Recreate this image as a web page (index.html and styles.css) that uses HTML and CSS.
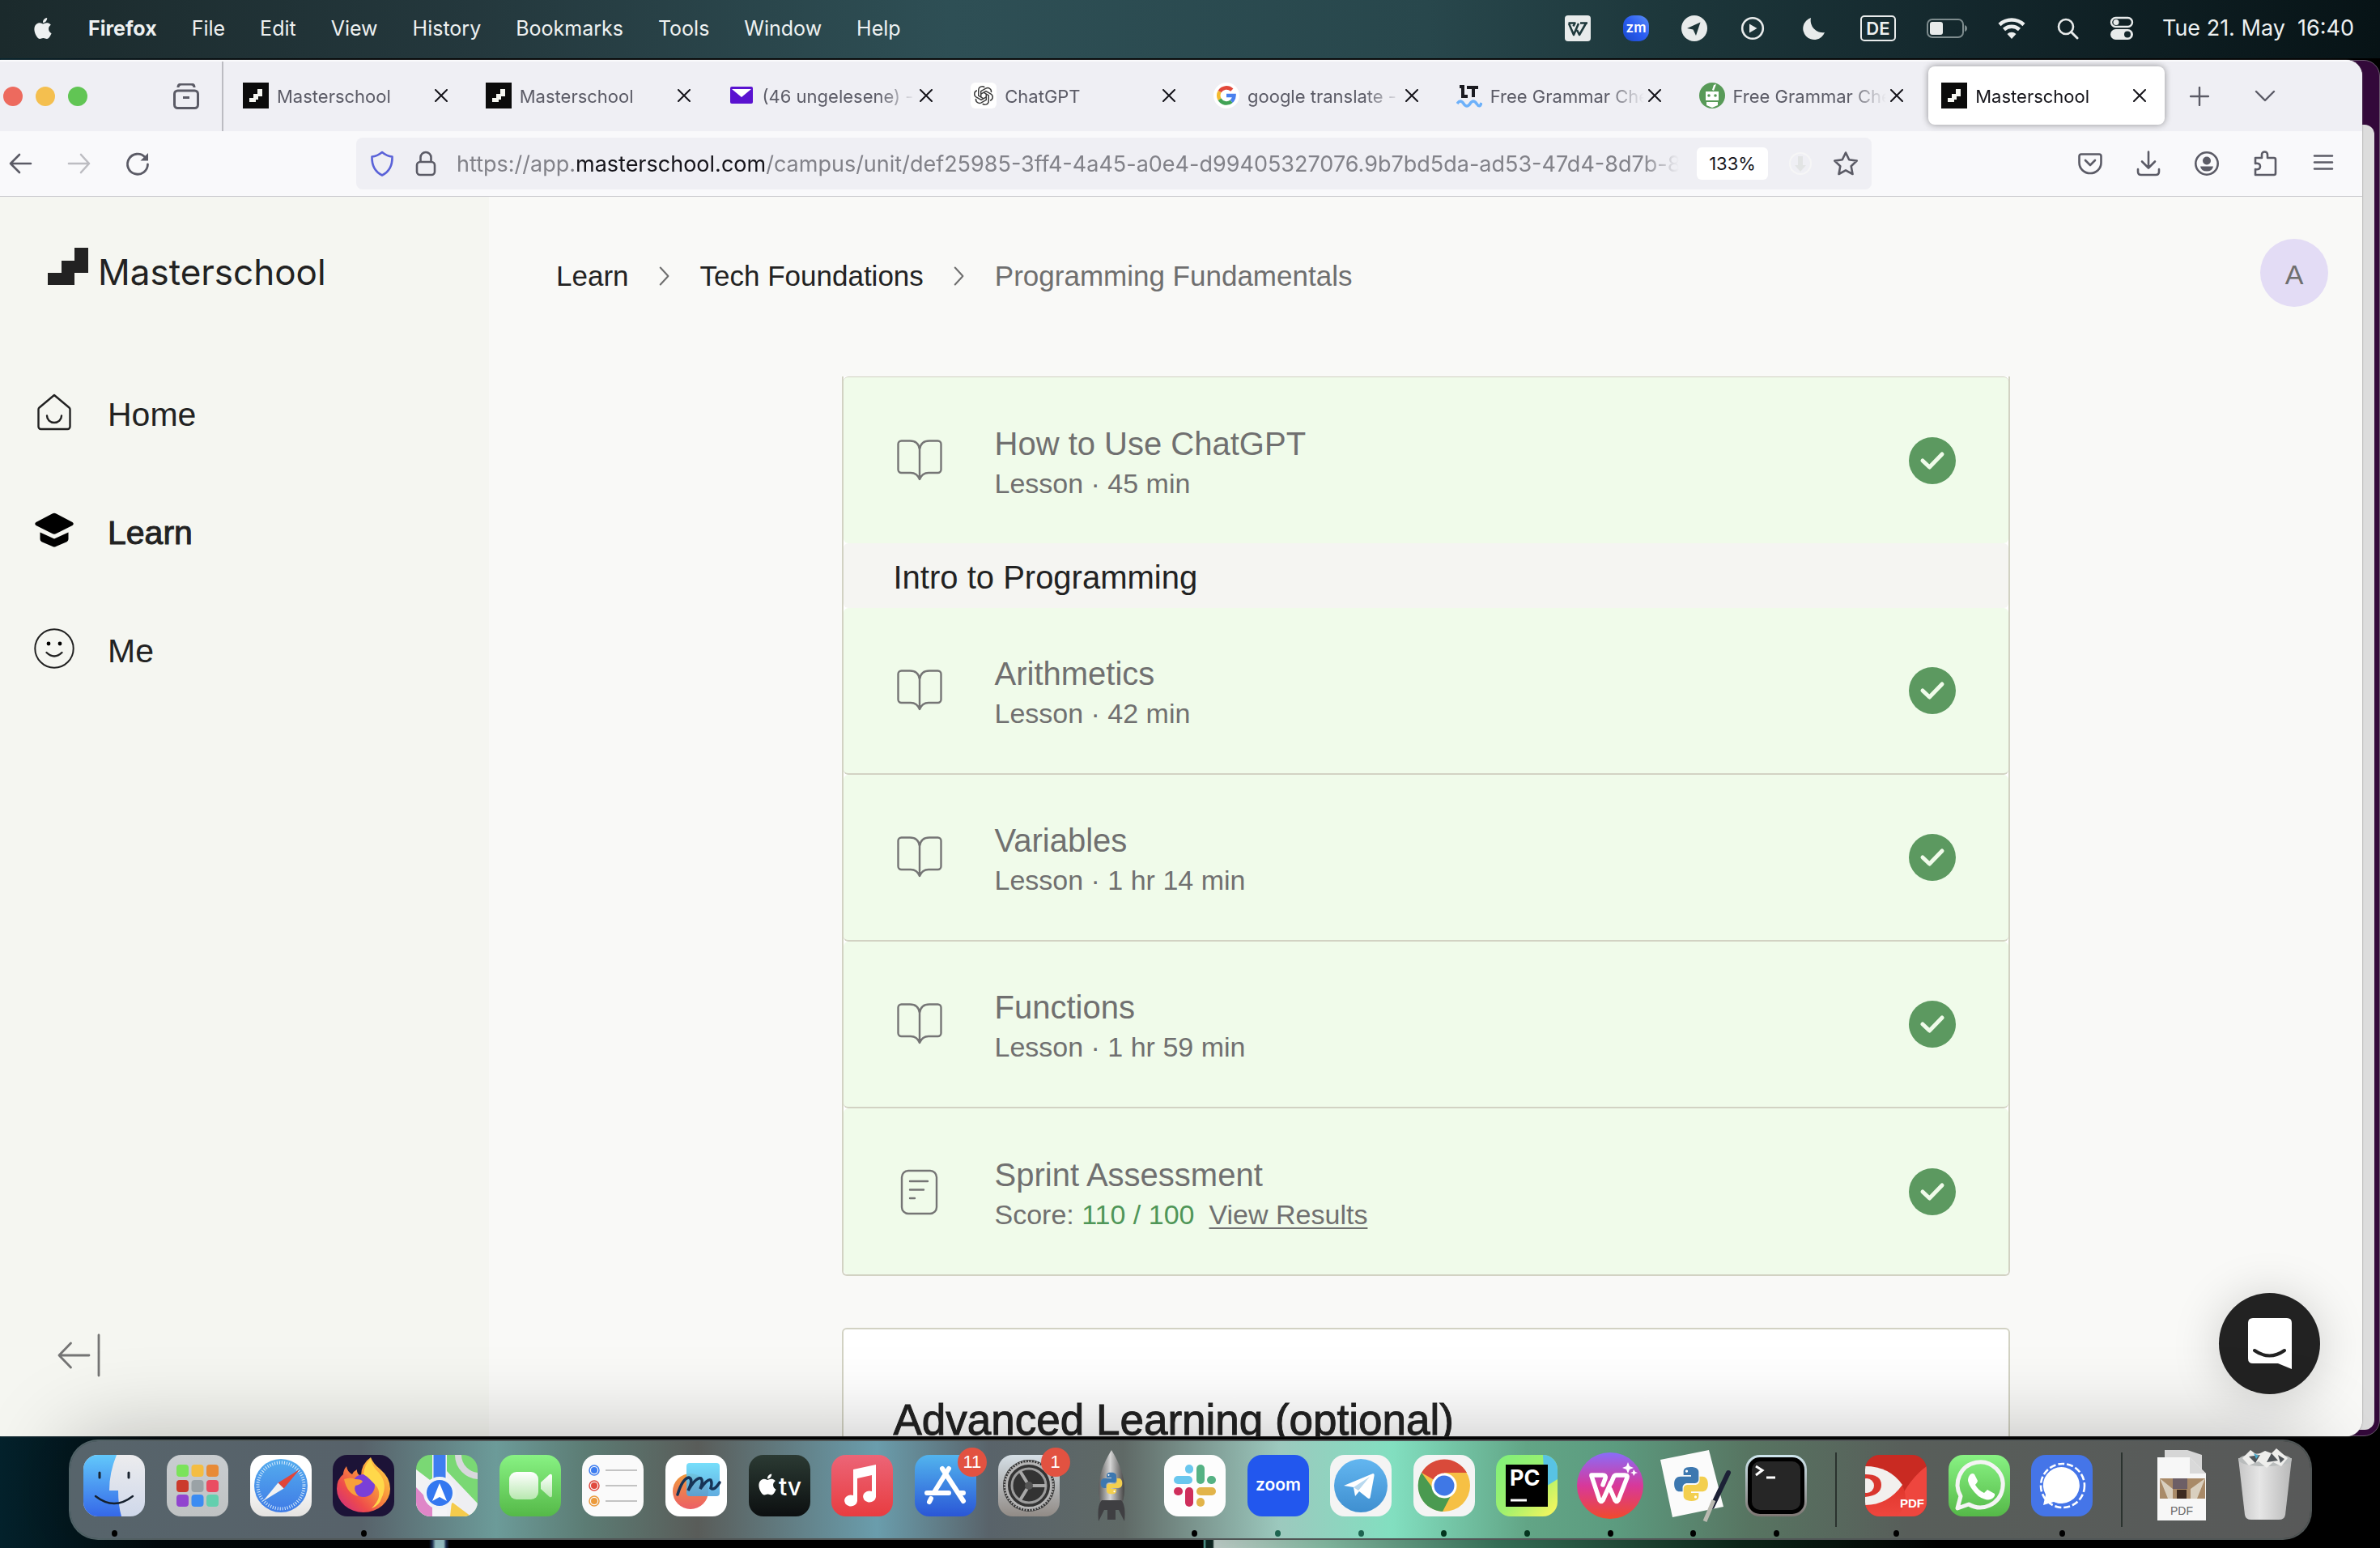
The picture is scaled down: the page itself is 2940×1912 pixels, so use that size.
FILE: index.html
```html
<!DOCTYPE html>
<html lang="en">
<head>
<meta charset="utf-8">
<title>Masterschool</title>
<link rel="stylesheet" href="styles.css">
</head>
<body class="desktop">

<svg class="defs" aria-hidden="true">
  <defs>
    <linearGradient id="g-zm" x1="1" y1="0" x2="0" y2="1"><stop offset="0" stop-color="#5b8ff5"/><stop offset=".5" stop-color="#2a5cf2"/><stop offset="1" stop-color="#1a48c8"/></linearGradient>
    <linearGradient id="g-finder" x1="0" y1="0" x2="0" y2="1"><stop offset="0" stop-color="#62c8fb"/><stop offset="1" stop-color="#3568e8"/></linearGradient>
    <linearGradient id="g-finder2" x1="0" y1="0" x2="0" y2="1"><stop offset="0" stop-color="#ececee"/><stop offset="1" stop-color="#cfd8ea"/></linearGradient>
    <linearGradient id="g-grey" x1="0" y1="0" x2="0" y2="1"><stop offset="0" stop-color="#c9cdd0"/><stop offset="1" stop-color="#bfc2c3"/></linearGradient>
    <linearGradient id="g-white" x1="0" y1="0" x2="0" y2="1"><stop offset=".4" stop-color="#ffffff"/><stop offset="1" stop-color="#e4e2e0"/></linearGradient>
    <linearGradient id="g-blue" x1="0" y1="0" x2="0" y2="1"><stop offset="0" stop-color="#54acee"/><stop offset="1" stop-color="#3f7be6"/></linearGradient>
    <linearGradient id="g-fox" x1="1" y1="0" x2="0" y2="1"><stop offset="0" stop-color="#ffe04b"/><stop offset=".4" stop-color="#f9953b"/><stop offset=".7" stop-color="#ee4b4b"/><stop offset="1" stop-color="#c9268a"/></linearGradient>
    <linearGradient id="g-green" x1="0" y1="0" x2="0" y2="1"><stop offset="0" stop-color="#88f283"/><stop offset="1" stop-color="#55b948"/></linearGradient>
    <linearGradient id="g-cam" x1="0" y1="0" x2="0" y2="1"><stop offset="0" stop-color="#ffffff"/><stop offset="1" stop-color="#b8e8b0"/></linearGradient>
    <linearGradient id="g-free" x1="0" y1="0" x2="0" y2="1"><stop offset="0" stop-color="#68dbfa"/><stop offset="1" stop-color="#4fa3dc"/></linearGradient>
    <linearGradient id="g-orange" x1="0" y1="0" x2="0" y2="1"><stop offset="0" stop-color="#f09a3c"/><stop offset="1" stop-color="#ec5f66"/></linearGradient>
    <linearGradient id="g-tv" x1="0" y1="0" x2="0" y2="1"><stop offset="0" stop-color="#2b3a33"/><stop offset="1" stop-color="#0c0f10"/></linearGradient>
    <linearGradient id="g-music" x1="0" y1="0" x2="0" y2="1"><stop offset="0" stop-color="#ec6577"/><stop offset="1" stop-color="#e83c40"/></linearGradient>
    <linearGradient id="g-store" x1="0" y1="0" x2="0" y2="1"><stop offset="0" stop-color="#52b4ee"/><stop offset="1" stop-color="#2a56d6"/></linearGradient>
    <linearGradient id="g-set" x1="0" y1="0" x2="0" y2="1"><stop offset="0" stop-color="#d5dfe6"/><stop offset="1" stop-color="#918b86"/></linearGradient>
    <linearGradient id="g-metal" x1="0" y1="0" x2="1" y2="0"><stop offset="0" stop-color="#5a5a5a"/><stop offset=".45" stop-color="#d6d6d6"/><stop offset="1" stop-color="#444"/></linearGradient>
    <linearGradient id="g-tg" x1="0" y1="0" x2="0" y2="1"><stop offset="0" stop-color="#63b6f0"/><stop offset="1" stop-color="#3f8fd0"/></linearGradient>
    <linearGradient id="g-pc" x1="0" y1="0" x2="1" y2="1"><stop offset="0" stop-color="#7ff07a"/><stop offset=".5" stop-color="#9df06e"/><stop offset="1" stop-color="#fff75c"/></linearGradient>
    <linearGradient id="g-wps" x1="0" y1="0" x2="0" y2="1"><stop offset="0" stop-color="#8a6cf8"/><stop offset=".5" stop-color="#d8389a"/><stop offset="1" stop-color="#f04a2c"/></linearGradient>
    <linearGradient id="g-term" x1="0" y1="0" x2="0" y2="1"><stop offset="0" stop-color="#cfe6ee"/><stop offset="1" stop-color="#7d7672"/></linearGradient>
    <linearGradient id="g-red" x1="0" y1="0" x2="0" y2="1"><stop offset="0" stop-color="#e0362c"/><stop offset="1" stop-color="#ee463e"/></linearGradient>
    <linearGradient id="g-trash" x1="0" y1="0" x2="1" y2="0"><stop offset="0" stop-color="#c6c6c6"/><stop offset=".4" stop-color="#e6e6e6"/><stop offset="1" stop-color="#b8b8b8"/></linearGradient>
    <clipPath id="clip-app"><rect width="76" height="76" rx="18"/></clipPath>
  </defs>
  <symbol id="i-stairs" viewBox="0 0 32 32"><rect width="32" height="32" fill="#0b0b0b"/><path d="M18 8h6v9h-5v4h-3v3H8v-5h5v-5h5z" fill="#f5f6f1"/></symbol>
  <symbol id="i-x" viewBox="0 0 16 16"><path d="M1 1l14 14M15 1L1 15" stroke="#15141a" stroke-width="2" stroke-linecap="round" fill="none"/></symbol>
  <symbol id="i-chev" viewBox="0 0 16 28"><path d="M2 2l11 12L2 26" fill="none" stroke="#6f6f6f" stroke-width="2.400" stroke-linecap="round" stroke-linejoin="round"/></symbol>
  <symbol id="i-book" viewBox="0 0 64 64"><path d="M32 18C31 11 27 7.500 20 7.500H9.500a4 4 0 0 0-4 4V43a4 4 0 0 0 4 4H21c6 0 9 3 11 8 2-5 5-8 11-8h11.500a4 4 0 0 0 4-4V11.500a4 4 0 0 0-4-4H44c-7 0-11 3.500-12 10.500zM32 18v37" fill="none" stroke="#757575" stroke-width="2.400" stroke-linejoin="round"/></symbol>
  <symbol id="i-doc" viewBox="0 0 64 64"><rect x="10" y="6" width="43" height="53" rx="8" fill="none" stroke="#757575" stroke-width="2.400"/><path d="M20 19h22M20 29.500h17M20 40h6" stroke="#757575" stroke-width="2.400" stroke-linecap="round"/></symbol>
  <symbol id="i-check" viewBox="0 0 58 58"><circle cx="29" cy="29" r="29" fill="#5c9960"/><path d="M17 29l8.500 8L41 21" fill="none" stroke="#f0fbea" stroke-width="5" stroke-linecap="round" stroke-linejoin="round"/></symbol>
  <symbol id="i-apple" viewBox="0 0 24 24"><path d="M12.152 6.896c-.948 0-2.415-1.078-3.960-1.040-2.040.027-3.910 1.183-4.961 3.014-2.117 3.675-.546 9.103 1.519 12.090 1.013 1.454 2.208 3.090 3.792 3.039 1.520-.065 2.090-.987 3.935-.987 1.831 0 2.350.987 3.960.948 1.637-.026 2.676-1.480 3.676-2.948 1.156-1.688 1.636-3.325 1.662-3.415-.039-.013-3.182-1.221-3.220-4.857-.026-3.040 2.480-4.494 2.597-4.559-1.429-2.090-3.623-2.324-4.390-2.376-2-.156-3.675 1.090-4.610 1.090zM15.530 3.830c.843-1.012 1.400-2.427 1.245-3.830-1.207.052-2.662.805-3.532 1.818-.780.896-1.454 2.338-1.273 3.714 1.338.104 2.715-.688 3.559-1.701"/></symbol>
  <symbol id="i-python" viewBox="0 0 40 40"><path d="M19.500 1C12 1 11.500 4 11.500 6.500V10H20v1.500H8C4 11.500 1 14 1 20s3 8.500 6 8.500h3.500V24c0-3 2.500-5 5-5h9c2.500 0 4-2 4-4.500v-8C28.500 3.500 26 1 19.500 1z" fill="#3d78b0"/><path d="M20.500 39c7.500 0 8-3 8-5.500V30H20v-1.500h12c4 0 7-2.500 7-8.500s-3-8.500-6-8.500h-3.500V16c0 3-2.500 5-5 5h-9c-2.500 0-4 2-4 4.500v8c0 3 2.500 5.500 9 5.500z" fill="#f3cf4e"/><circle cx="15" cy="5.500" r="1.500" fill="#fff"/><circle cx="25" cy="34.500" r="1.500" fill="#fff"/></symbol>
</svg>

<header class="menubar">
  <nav class="menus" aria-label="Menu bar">
    <svg class="apple"><use href="#i-apple"/></svg>
    <strong>Firefox</strong>
    <span>File</span><span>Edit</span><span>View</span><span>History</span><span>Bookmarks</span><span>Tools</span><span>Window</span><span>Help</span>
  </nav>
  <div class="status">
    <svg width="34" height="34" viewBox="0 0 34 34"><rect x="1" y="1" width="32" height="32" rx="4" fill="#e8ebeb"/><path d="M5.500 10.500h8l-2 4M6 11l6 14 6-14M16 19l3 6 8-14M20 10.500h9" fill="none" stroke="#1f393c" stroke-width="2.600" stroke-linejoin="round"/></svg>
    <svg width="34" height="34" viewBox="0 0 34 34"><rect x="1" y="1" width="32" height="32" rx="13" fill="url(#g-zm)"/><text x="17" y="22" text-anchor="middle" class="zm">zm</text></svg>
    <svg width="34" height="34" viewBox="0 0 34 34"><circle cx="17" cy="17" r="16" fill="#e8ebeb"/><path d="M24.500 9.500L8 17l7.500 1.500L19 26z" fill="#1c3437"/></svg>
    <svg width="34" height="34" viewBox="0 0 34 34"><circle cx="17" cy="17" r="12.800" fill="none" stroke="#e8ebeb" stroke-width="2.600"/><path d="M13 11.500v11l9.500-5.500z" fill="#e8ebeb"/></svg>
    <svg width="40" height="34" viewBox="0 0 40 34"><path d="M17 4a15 15 0 0 0 17 18A13.800 13.800 0 1 1 17 4z" fill="#e8ebeb"/></svg>
    <span class="lang">DE</span>
    <svg width="50" height="26" viewBox="0 0 50 26"><rect x="1" y="2" width="44" height="22" rx="6" fill="none" stroke="#7e8c8e" stroke-width="2"/><rect x="4" y="5" width="16" height="16" rx="3" fill="#e8ebeb"/><path d="M47 9q3 1 3 4t-3 4z" fill="#7e8c8e"/></svg>
    <svg width="34" height="28" viewBox="0 0 34 28"><path d="M2 9.500a22 22 0 0 1 30 0M7.500 15.500a14 14 0 0 1 19 0" fill="none" stroke="#eceeee" stroke-width="4.500"/><path d="M17 27l-5.500-6a8 8 0 0 1 11 0z" fill="#eceeee"/></svg>
    <svg width="28" height="28" viewBox="0 0 28 28"><circle cx="12" cy="12" r="9" fill="none" stroke="#e8ebeb" stroke-width="2.600"/><path d="M18.500 18.500L26 26" stroke="#e8ebeb" stroke-width="3" stroke-linecap="round"/></svg>
    <svg width="30" height="30" viewBox="0 0 30 30"><rect x="2" y="2" width="26" height="11" rx="5.500" fill="none" stroke="#e8ebeb" stroke-width="2.400"/><circle cx="8" cy="7.500" r="3.500" fill="#e8ebeb"/><rect x="1" y="16" width="28" height="13" rx="6.500" fill="#e8ebeb"/><circle cx="22" cy="22.500" r="4" fill="#13262a"/></svg>
    <time>Tue 21. May&nbsp; 16:40</time>
  </div>
</header>

<div class="stage">
  <div class="back-window purple"></div>
  <div class="back-window pale"></div>
  <section class="window">
    <div class="tabstrip">
      <div class="lights"><i class="red"></i><i class="yellow"></i><i class="green"></i></div>
      <button class="view-btn" aria-label="Firefox View"><svg width="32" height="32" viewBox="0 0 32 32"><path d="M6 5q0-4 4-4h12q4 0 4 4" fill="none" stroke="#5b5b66" stroke-width="3"/><rect x="1.500" y="9" width="29" height="21.500" rx="4" fill="none" stroke="#5b5b66" stroke-width="3"/><rect x="12" y="16" width="8" height="3" fill="#5b5b66"/></svg></button>
      <div class="tabs">
        <div class="tab"><svg class="fav"><use href="#i-stairs"/></svg><a href="#">Masterschool</a><button class="close" aria-label="Close tab"><svg><use href="#i-x"/></svg></button></div>
        <div class="tab"><svg class="fav"><use href="#i-stairs"/></svg><a href="#">Masterschool</a><button class="close" aria-label="Close tab"><svg><use href="#i-x"/></svg></button></div>
        <div class="tab"><svg class="fav" viewBox="0 0 32 32"><rect x="2" y="5" width="28" height="21" rx="2" fill="#5a12d0"/><path d="M4 8h24L16 18z" fill="#fff"/></svg><a href="#">(46 ungelesene) -</a><button class="close" aria-label="Close tab"><svg><use href="#i-x"/></svg></button></div>
        <div class="tab"><svg class="fav" viewBox="0 0 32 32"><rect width="32" height="32" rx="6" fill="#fff"/><g fill="none" stroke="#3a3a3a" stroke-width="1.800" transform="translate(16 16) scale(.82) translate(-16 -16)"><path id="petal" d="M12 18.300V9.500l7.500-4.300a5.500 5.500 0 0 1 8 6"/><use href="#petal" transform="rotate(60 16 16)"/><use href="#petal" transform="rotate(120 16 16)"/><use href="#petal" transform="rotate(180 16 16)"/><use href="#petal" transform="rotate(240 16 16)"/><use href="#petal" transform="rotate(300 16 16)"/></g></svg><a href="#">ChatGPT</a><button class="close" aria-label="Close tab"><svg><use href="#i-x"/></svg></button></div>
        <div class="tab"><svg class="fav" viewBox="0 0 32 32"><circle cx="16" cy="16" r="16" fill="#fff"/><g fill="none" stroke-width="4.600"><path d="M22.800 9.200A9.700 9.700 0 0 0 7.600 11.200" stroke="#e2483a"/><path d="M7.600 11.200a9.700 9.700 0 0 0 0 9.600" stroke="#f4bb2f"/><path d="M7.600 20.800a9.700 9.700 0 0 0 14.600 2.400" stroke="#41a355"/><path d="M22.200 23.200a9.700 9.700 0 0 0 3.300-7.200H16" stroke="#4a80ee"/></g></svg><a href="#">google translate -</a><button class="close" aria-label="Close tab"><svg><use href="#i-x"/></svg></button></div>
        <div class="tab"><svg class="fav" viewBox="0 0 32 32"><path d="M4 5h4v12h6M13 6h14M21 6v12" fill="none" stroke="#1b1b20" stroke-width="4"/><path d="M1 26q4-6 8 0t8 0 8 0 6-1" fill="none" stroke="#6db1fa" stroke-width="3.500"/></svg><a href="#">Free Grammar Che</a><button class="close" aria-label="Close tab"><svg><use href="#i-x"/></svg></button></div>
        <div class="tab"><svg class="fav" viewBox="0 0 32 32"><circle cx="16" cy="16" r="16" fill="#589a58"/><path d="M8 11h16v11H8zM9 24h14v4l-7 3-7-3zM16 9l2-6 3-1-3 8z" fill="#fff"/><circle cx="12" cy="16" r="1.800" fill="#589a58"/><circle cx="20" cy="16" r="1.800" fill="#589a58"/></svg><a href="#">Free Grammar Che</a><button class="close" aria-label="Close tab"><svg><use href="#i-x"/></svg></button></div>
        <div class="tab active"><svg class="fav"><use href="#i-stairs"/></svg><a href="#">Masterschool</a><button class="close" aria-label="Close tab"><svg><use href="#i-x"/></svg></button></div>
      </div>
      <div class="tab-tools">
        <button aria-label="New tab"><svg width="24" height="24" viewBox="0 0 24 24"><path d="M12 1v22M1 12h22" stroke="#5b5b66" stroke-width="2.400" stroke-linecap="round"/></svg></button>
        <button aria-label="List all tabs"><svg width="26" height="16" viewBox="0 0 26 16"><path d="M2 2l11 11L24 2" fill="none" stroke="#5b5b66" stroke-width="2.400" stroke-linecap="round" stroke-linejoin="round"/></svg></button>
      </div>
    </div>

    <div class="toolbar">
      <div class="nav-btns">
        <button aria-label="Back"><svg width="32" height="32" viewBox="0 0 32 32"><path d="M28 16H3M14 5L3 16l11 11" fill="none" stroke="#5b5b66" stroke-width="2.600" stroke-linecap="round" stroke-linejoin="round"/></svg></button>
        <button aria-label="Forward" disabled><svg width="32" height="32" viewBox="0 0 32 32"><path d="M3 16h25M18 5l10 11-10 11" fill="none" stroke="#bdbdc2" stroke-width="2.600" stroke-linecap="round" stroke-linejoin="round"/></svg></button>
        <button aria-label="Reload"><svg width="32" height="32" viewBox="0 0 32 32"><path d="M28.500 17A12.500 12.500 0 1 1 25 8" fill="none" stroke="#5b5b66" stroke-width="2.800" stroke-linecap="round"/><path d="M29 3v9.500h-9.500z" fill="#5b5b66"/></svg></button>
      </div>
      <div class="urlbar">
        <svg width="32" height="32" viewBox="0 0 32 32"><path d="M16 2q6 5 12.500 5.500Q29 24 16 30.500 3 24 3.500 7.500 10 7 16 2z" fill="none" stroke="#5a62d8" stroke-width="2.600" stroke-linejoin="round"/></svg>
        <svg width="32" height="32" viewBox="0 0 32 32"><rect x="5" y="14" width="22" height="16" rx="4" fill="none" stroke="#5b5b66" stroke-width="2.600"/><path d="M9.500 14V8.500a6.500 6.500 0 0 1 13 0V14" fill="none" stroke="#5b5b66" stroke-width="2.600"/></svg>
        <div class="url" role="textbox" aria-label="Address" contenteditable="true">https://app.<b>masterschool.com</b>/campus/unit/def25985-3ff4-4a45-a0e4-d99405327076.9b7bd5da-ad53-47d4-8d7b-84</div>
        <button class="zoom">133%</button>
        <svg class="dl" width="28" height="28" viewBox="0 0 28 28"><circle cx="14" cy="14" r="13" fill="none" stroke="#f6f6f6" stroke-width="2"/><path d="M11 5h6v11h4l-7 8-7-8h4z" fill="#e2e4e4"/></svg>
        <button aria-label="Bookmark"><svg width="32" height="32" viewBox="0 0 32 32"><path d="M16 2.500l4.200 8.800 9.500 1.300-7 6.600 1.800 9.800-8.500-4.700L7.500 29l1.800-9.800-7-6.600 9.500-1.300z" fill="none" stroke="#5b5b66" stroke-width="2.600" stroke-linejoin="round"/></svg></button>
      </div>
      <div class="ext-btns">
        <button aria-label="Pocket"><svg width="32" height="32" viewBox="0 0 32 32"><path d="M5 4.500h22q2.500 0 2.500 2.500v8a13.500 13 0 0 1-27 0V7q0-2.500 2.500-2.500z" fill="none" stroke="#5b5b66" stroke-width="2.600"/><path d="M10 12l6 6 6-6" fill="none" stroke="#5b5b66" stroke-width="2.600" stroke-linecap="round" stroke-linejoin="round"/></svg></button>
        <button aria-label="Downloads"><svg width="32" height="32" viewBox="0 0 32 32"><path d="M16 1.500V21M8 13.500l8 8 8-8M3 23v3q0 4 4 4h18q4 0 4-4v-3" fill="none" stroke="#5b5b66" stroke-width="2.600" stroke-linecap="round" stroke-linejoin="round"/></svg></button>
        <button aria-label="Account"><svg width="32" height="32" viewBox="0 0 32 32"><circle cx="16" cy="16" r="13.700" fill="none" stroke="#5b5b66" stroke-width="2.600"/><circle cx="16" cy="12.500" r="5" fill="#5b5b66"/><path d="M8 19.500h16q-1 6-8 6t-8-6z" fill="#5b5b66"/></svg></button>
        <button aria-label="Extensions"><svg width="32" height="32" viewBox="0 0 32 32"><path d="M4 30V23q6 1 6-3.500T4 16V9h8V5a3.500 3.500 0 0 1 7 0v4h8q2 0 2 2v17q0 2-2 2z" fill="none" stroke="#5b5b66" stroke-width="2.600" stroke-linejoin="round"/></svg></button>
        <button aria-label="Menu"><svg width="32" height="32" viewBox="0 0 32 32"><path d="M5 6.500h22M5 14.500h22M5 22.500h22" stroke="#5b5b66" stroke-width="2.600" stroke-linecap="round"/></svg></button>
      </div>
    </div>

    <div class="page">
      <aside class="sidebar">
        <a class="logo" href="#"><svg width="50" height="46" viewBox="0 0 50 46"><path d="M33 0h17v31H33v15H0V31h17V16h16z" fill="#222"/></svg><span>Masterschool</span></a>
        <nav class="side-nav" aria-label="Main">
          <a href="#"><svg width="50" height="50" viewBox="0 0 50 50"><path d="M25 3L43.500 18.500a3 3 0 0 1 1 2.500V42a3 3 0 0 1-3 3H8.500a3 3 0 0 1-3-3V21a3 3 0 0 1 1-2.500z" fill="none" stroke="#222" stroke-width="2.400" stroke-linejoin="round"/><path d="M16 28.500a9 8.500 0 0 0 18 0" fill="none" stroke="#222" stroke-width="2.400" stroke-linecap="round"/></svg><span>Home</span></a>
          <a href="#" class="current"><svg width="50" height="50" viewBox="0 0 50 50"><path d="M22.500 3.500q2.500-1.500 5 0L47.500 14q2.500 2 0 4L27.500 28q-2.500 1.500-5 0L2.500 18q-2.500-2 0-4z"/><path d="M7.500 26.500L25 34.500l17.500-8V35q0 2-2 3.200L27 44q-2 1-4 0L9.500 38.200q-2-1.200-2-3.200z"/></svg><span>Learn</span></a>
          <a href="#"><svg width="50" height="50" viewBox="0 0 50 50"><circle cx="25" cy="24" r="23.700" fill="none" stroke="#222" stroke-width="2"/><circle cx="18" cy="18" r="2.400"/><circle cx="32" cy="18" r="2.400"/><path d="M15.500 29q9.500 9 19 0" fill="none" stroke="#222" stroke-width="2.400" stroke-linecap="round"/></svg><span>Me</span></a>
        </nav>
        <button class="collapse" aria-label="Collapse sidebar"><svg width="54" height="54" viewBox="0 0 54 54"><path d="M40 27H3M17.500 12L3 27l14.500 15M52 2v50" fill="none" stroke="#757575" stroke-width="2.800" stroke-linecap="round" stroke-linejoin="round"/></svg></button>
      </aside>

      <main class="main">
        <div class="topbar">
          <nav class="crumbs" aria-label="Breadcrumb">
            <a href="#">Learn</a><svg><use href="#i-chev"/></svg><a href="#">Tech Foundations</a><svg><use href="#i-chev"/></svg><span>Programming Fundamentals</span>
          </nav>
          <button class="avatar">A</button>
        </div>
        <div class="units">
          <section class="card lessons">
            <article class="row"><svg class="kind"><use href="#i-book"/></svg><div class="info"><h3>How to Use ChatGPT</h3><p>Lesson · 45 min</p></div><svg class="done"><use href="#i-check"/></svg></article>
            <h2 class="group">Intro to Programming</h2>
            <article class="row"><svg class="kind"><use href="#i-book"/></svg><div class="info"><h3>Arithmetics</h3><p>Lesson · 42 min</p></div><svg class="done"><use href="#i-check"/></svg></article>
            <article class="row"><svg class="kind"><use href="#i-book"/></svg><div class="info"><h3>Variables</h3><p>Lesson · 1 hr 14 min</p></div><svg class="done"><use href="#i-check"/></svg></article>
            <article class="row"><svg class="kind"><use href="#i-book"/></svg><div class="info"><h3>Functions</h3><p>Lesson · 1 hr 59 min</p></div><svg class="done"><use href="#i-check"/></svg></article>
            <article class="row"><svg class="kind"><use href="#i-doc"/></svg><div class="info"><h3>Sprint Assessment</h3><p>Score: <span class="score">110 / 100</span><a href="#">View Results</a></p></div><svg class="done"><use href="#i-check"/></svg></article>
          </section>
          <section class="card next"><h2>Advanced Learning (optional)</h2></section>
        </div>
      </main>
      <button class="chat" aria-label="Open chat"><svg width="56" height="64" viewBox="0 0 56 64"><path d="M7 0h42q6 0 6 6v57l-17-7H7q-6 0-6-6V6q0-6 6-6z" fill="#fff"/><path d="M9 40q18.500 13 37 0" fill="none" stroke="#222" stroke-width="4" stroke-linecap="round"/></svg></button>
    </div>
  </section>
</div>

<footer class="dock">
  <div class="app on"><svg viewBox="0 0 76 76"><g clip-path="url(#clip-app)"><rect width="76" height="76" fill="url(#g-finder2)"/><path d="M0 0h41Q32 22 32 44h11q0 18 4 32H0z" fill="url(#g-finder)"/></g><path d="M20 22v6M56 22v6" stroke="#1a2430" stroke-width="3" stroke-linecap="round"/><path d="M15 51q23 18 46 0" fill="none" stroke="#15202c" stroke-width="2.400" stroke-linecap="round"/></svg></div>
  <div class="app"><svg viewBox="0 0 76 76"><rect width="76" height="76" rx="18" fill="url(#g-grey)"/><g><rect x="12" y="12" width="15" height="15" rx="4" fill="#7be35a"/><rect x="30.500" y="12" width="15" height="15" rx="4" fill="#f4bd42"/><rect x="49" y="12" width="15" height="15" rx="4" fill="#e88a36"/><rect x="12" y="31" width="15" height="15" rx="4" fill="#cb3a2c"/><rect x="30.500" y="31" width="15" height="15" rx="4" fill="#9aa2a6"/><rect x="49" y="31" width="15" height="15" rx="4" fill="#ea4d62"/><rect x="12" y="49" width="15" height="15" rx="4" fill="#9144cf"/><rect x="30.500" y="49" width="15" height="15" rx="4" fill="#3c8cf2"/><rect x="49" y="49" width="15" height="15" rx="4" fill="#63cfae"/></g></svg></div>
  <div class="app"><svg viewBox="0 0 76 76"><rect width="76" height="76" rx="18" fill="url(#g-white)"/><circle cx="38" cy="38" r="33" fill="url(#g-blue)"/><circle cx="38" cy="38" r="28.500" fill="none" stroke="#d9ecfb" stroke-width="4" stroke-dasharray="1 2"/><path d="M61 18L34.500 34.500l7 7z" fill="#e0453a"/><path d="M16 57l18.500-22.500 7 7z" fill="#f2f2f2"/></svg></div>
  <div class="app on"><svg viewBox="0 0 76 76"><rect width="76" height="76" rx="18" fill="#1c1337"/><path d="M47 3q3 8 12 15 12 10 12 24A33 29 0 0 1 5 42q0-12 8-18 0-5 4-10 1 7 7 10 2-4 6-6-1 5 5 8 0-15 12-23z" fill="url(#g-fox)"/><circle cx="38" cy="38" r="14" fill="#7a3fd8"/><path d="M14 30q8-3 14 0 8 0 9 3-3 4-9 5-3 6 4 13-14-2-18-21z" fill="#f7a03a"/><path d="M47 5q2 10 10 17 12 14 3 32-2 8-12 12 14-14 7-26-10-12-17-16 1-12 9-19z" fill="#ffd84a"/></svg></div>
  <div class="app"><svg viewBox="0 0 76 76"><g clip-path="url(#clip-app)"><rect width="76" height="76" fill="#7ad874"/><path d="M0 18L76 76H0z" fill="#f2f2f4"/><path d="M0 40l34 36H0z" fill="#df86c8"/><path d="M38 20L76 60v16H66L30 40z" fill="#eeeef2"/><path d="M44 58l24 18H42z" fill="#f5cb4c"/><path d="M20 0h18v76H20z" fill="#f4f4f6"/><path d="M21.500 0h15v34h-15z" fill="#3f7df0"/><circle cx="78" cy="0" r="26" fill="none" stroke="#d8d8dc" stroke-width="8"/></g><circle cx="29" cy="47" r="18" fill="#3478f0" stroke="#f0f2f6" stroke-width="4"/><path d="M29 35l9 22-9-5-9 5z" fill="#fff"/></svg></div>
  <div class="app"><svg viewBox="0 0 76 76"><rect width="76" height="76" rx="18" fill="url(#g-green)"/><rect x="12" y="21" width="36" height="34" rx="9" fill="url(#g-cam)"/><path d="M51 34l11-10q3-1 3 2v24q0 3-3 2L51 42z" fill="url(#g-cam)"/></svg></div>
  <div class="app"><svg viewBox="0 0 76 76"><rect width="76" height="76" rx="18" fill="#fafafa"/><path d="M29 19h39M29 38h39M29 57h39" stroke="#c3c3c3" stroke-width="2"/><g stroke-width="1.500" fill="none"><circle cx="15" cy="19" r="6" stroke="#3d7df0"/><circle cx="15" cy="38" r="6" stroke="#e04a40"/><circle cx="15" cy="57" r="6" stroke="#eb9a3c"/></g><circle cx="15" cy="19" r="4" fill="#3d7df0"/><circle cx="15" cy="38" r="4" fill="#e04a40"/><circle cx="15" cy="57" r="4" fill="#eb9a3c"/></svg></div>
  <div class="app"><svg viewBox="0 0 76 76"><rect width="76" height="76" rx="18" fill="#fff"/><circle cx="31" cy="45" r="22" fill="url(#g-orange)"/><rect x="26" y="10" width="41" height="41" rx="4" fill="url(#g-free)" opacity=".9"/><path d="M15 49q6-20 14-21 6 2-1 16 10-17 16-15 3 3-1 13 9-13 13-11 2 4 0 10 4 4 11-7" fill="none" stroke="#173456" stroke-width="3.500" stroke-linecap="round"/></svg></div>
  <div class="app"><svg viewBox="0 0 76 76"><rect width="76" height="76" rx="18" fill="url(#g-tv)"/><svg x="10" y="23" width="26" height="27" fill="#fff"><use href="#i-apple"/></svg><text x="51" y="50" text-anchor="middle" class="tv">tv</text></svg></div>
  <div class="app"><svg viewBox="0 0 76 76"><rect width="76" height="76" rx="18" fill="url(#g-music)"/><path d="M27 18l28-6v40a8 7 0 1 1-5-7V25l-18 4v28a8 7 0 1 1-5-7z" fill="#fff"/></svg></div>
  <div class="app"><svg viewBox="0 0 76 76"><rect width="76" height="76" rx="18" fill="url(#g-store)"/><path d="M34 17l26 40M42 17L24 46M15 47h27M54 47h6M20 54l-2 4" stroke="#fff" stroke-width="6" stroke-linecap="round"/></svg><span class="badge">11</span></div>
  <div class="app"><svg viewBox="0 0 76 76"><rect width="76" height="76" rx="18" fill="url(#g-set)"/><circle cx="38" cy="38" r="32" fill="#333"/><circle cx="38" cy="38" r="27.500" fill="none" stroke="#b5b5b5" stroke-width="3"/><circle cx="38" cy="38" r="30" fill="none" stroke="#b5b5b5" stroke-width="2.500" stroke-dasharray="1.500 2"/><circle cx="38" cy="38" r="21" fill="none" stroke="#9c9c9c" stroke-width="3"/><path d="M38 38h21M38 38L27 20M38 38L27 56" stroke="#a8a8a8" stroke-width="4"/><circle cx="38" cy="38" r="5" fill="#555"/></svg><span class="badge">1</span></div>
  <div class="app"><svg viewBox="0 0 76 76"><path d="M38-6q16 26 16 48 0 16-6 23H28q-6-7-6-23 0-22 16-48z" fill="url(#g-metal)"/><path d="M26 56q-6 6-4 26l7-14h4v12h10V68h4l7 14q2-20-4-26z" fill="#3f3f42"/><svg x="24" y="19" width="28" height="32"><use href="#i-python"/></svg></svg></div>
  <div class="app on"><svg viewBox="0 0 76 76"><rect width="76" height="76" rx="18" fill="#fdfdfd"/><g stroke-width="10" stroke-linecap="round"><path d="M17 31h13" stroke="#6ac7ee"/><path d="M31 17v1" stroke="#6ac7ee"/><path d="M45 17v14" stroke="#55b284"/><path d="M58 31h1" stroke="#55b284"/><path d="M45 45h14" stroke="#e2b44a"/><path d="M45 58v1" stroke="#e2b44a"/><path d="M31 45v14" stroke="#cf2f5c"/><path d="M17 45h1" stroke="#cf2f5c"/></g></svg></div>
  <div class="app on teal"><svg viewBox="0 0 76 76"><rect width="76" height="76" rx="18" fill="#2257ee"/><text x="38" y="44" text-anchor="middle" class="zoomtxt">zoom</text></svg></div>
  <div class="app on teal"><svg viewBox="0 0 76 76"><rect width="76" height="76" rx="18" fill="#f4f4f4"/><circle cx="38" cy="38" r="33" fill="url(#g-tg)"/><path d="M17 38l36-15q2 0 1.500 3l-5 27q-1 2-3.500 0l-10-8-5 6-2-11z" fill="#fff"/><path d="M29 40l20-13-14 17z" fill="#b8d8ee"/></svg></div>
  <div class="app on dark"><svg viewBox="0 0 76 76"><rect width="76" height="76" rx="18" fill="#f4f4f4"/><circle cx="38" cy="38" r="32" fill="#f6c044"/><path d="M38 38L10 22A32 32 0 0 1 66 22H38z" fill="#d94a3a"/><path d="M10 22A32 32 0 0 0 36 70L49 45l-23-1z" fill="#4a9a50"/><circle cx="38" cy="38" r="15.500" fill="#fff"/><circle cx="38" cy="38" r="12.500" fill="#3f78e6"/></svg></div>
  <div class="app on dark"><svg viewBox="0 0 76 76"><g clip-path="url(#clip-app)"><rect width="76" height="76" fill="url(#g-pc)"/><path d="M58 0h18v30L60 40z" fill="#58c3e4"/></g><rect x="12" y="12" width="52" height="52" fill="#000"/><text x="17" y="38" class="pctxt">PC</text><path d="M18 56h20" stroke="#fff" stroke-width="3"/></svg></div>
  <div class="app on"><svg viewBox="0 0 76 76"><circle cx="38" cy="38" r="41" fill="url(#g-wps)"/><path d="M15 25h14q4 0 3 4l-3 8M15 26l10 30q2 3 4 0l10-22M38 42l6 14q2 3 4 0l11-28q1-3-3-3H46q-3 0-4 3l-3 7" fill="none" stroke="#fff" stroke-width="5.500" stroke-linejoin="round" stroke-linecap="round"/><path d="M60 9l2 5 5 2-5 2-2 5-2-5-5-2 5-2zM67 18l2 3 3 1-3 1-2 3-1-3-3-1 3-1z" fill="#fff"/></svg></div>
  <div class="app on"><svg viewBox="0 0 76 76"><path d="M-3 6L57-6l18 70L12 77z" fill="#fbfbfb"/><svg x="11" y="14" width="48" height="44"><use href="#i-python"/></svg><path d="M81 22l-20 42" stroke="#1c2136" stroke-width="6" stroke-linecap="round"/><path d="M63 56L52 82" stroke="#b9b9b0" stroke-width="5"/></svg></div>
  <div class="app on"><svg viewBox="0 0 76 76"><rect width="76" height="76" rx="18" fill="url(#g-term)"/><rect x="3" y="3" width="70" height="70" rx="15" fill="#000"/><rect x="8" y="8" width="60" height="60" rx="10" fill="#262626"/><path d="M13 14l8 5-8 6M26 28h11" fill="none" stroke="#fff" stroke-width="3"/></svg></div>
  <div class="rule"></div>
  <div class="app on"><svg viewBox="0 0 76 76"><g clip-path="url(#clip-app)"><rect width="76" height="76" fill="#c92a22"/><path d="M76 14Q56 28 40 60L30 76h46z" fill="#ee463e"/><path d="M0 62q26-2 46-24 10 20-6 38H0z" fill="url(#g-red)"/><path d="M0 14q30 0 46 23-18 25-46 25z" fill="#f2f0ee"/><path d="M0 24q20 0 20 13T0 52z" fill="#d9362e"/><circle cx="2" cy="38" r="9" fill="#f2f0ee"/></g><text x="58" y="65" text-anchor="middle" class="pdftxt">PDF</text></svg></div>
  <div class="app"><svg viewBox="0 0 76 76"><rect width="76" height="76" rx="18" fill="url(#g-green)"/><path d="M11 66l4-15A28 28 0 1 1 25 61z" fill="none" stroke="#f4f4f4" stroke-width="5" stroke-linejoin="round"/><path d="M27 24q3-2 5 0l4 8q0 2-3 5 4 7 11 10l4-4 9 5q1 3-3 6-6 4-17-3Q26 41 24 32q0-5 3-8z" fill="#fff"/></svg></div>
  <div class="app on"><svg viewBox="0 0 76 76"><rect width="76" height="76" rx="18" fill="#4575e8"/><path d="M15 62l3-13A22.500 22.500 0 1 1 28 58z" fill="#fff"/><circle cx="39" cy="38" r="27" fill="none" stroke="#fff" stroke-width="2.600" stroke-dasharray="8 3"/></svg></div>
  <div class="rule"></div>
  <div class="app"><svg viewBox="0 0 76 76"><path d="M17-6h28l18 6v24H17z" fill="#d6d6d6"/><path d="M8 3h40l20 20v58H8z" fill="#f7f7f7"/><path d="M48 3l20 20H48z" fill="#d9d9d9"/><rect x="11" y="29" width="56" height="25" fill="#a98a68"/><rect x="27" y="29" width="18" height="13" fill="#6d5f66"/><path d="M11 29l16 13v12h-6zM67 29L49 42v12h8z" fill="#d9cfbf"/><rect x="32" y="43" width="12" height="11" fill="#3d2a20"/><text x="38" y="74" text-anchor="middle" class="filetxt">PDF</text></svg></div>
  <div class="app"><svg viewBox="0 0 76 76"><path d="M5 4h66l-8 70q-1 6-8 6H21q-7 0-8-6z" fill="url(#g-trash)"/><ellipse cx="38" cy="6" rx="33" ry="8" fill="#b9bcbc"/><path d="M10 4l10-10 8 6 10-5 8 3 6-6 14 12-8 10-10-5-8 7-10-8-12 5z" fill="#eeeeec"/><path d="M18 2l8 8 6-10zM40 9l6-11 8 9zM54 0l8 5-5 5z" fill="#4f5458"/><path d="M24-2l6 3-3 4z" fill="#4aa7c8"/></svg></div>
</footer>
</body>
</html>
```
FILE: styles.css
```css
* { box-sizing: border-box; margin: 0; padding: 0; }

.desktop {
  height: 100vh;
  display: flex;
  flex-direction: column;
  overflow: hidden;
  font-family: "Liberation Sans", Arial, sans-serif;
  color: #222;
  background:
    linear-gradient(90deg, transparent 0 530px, #1c2f55 534px, #a5d3d8 538px 548px, #1c2f55 551px, transparent 555px) left bottom / 1400px 10px no-repeat,
    linear-gradient(90deg, transparent 0 1486px, #6fd0c0 1488px, #0f2a24 1490px 1498px, #cfe0da 1500px, #8fcab0 1640px, #3d7d62 1850px, #0e2a1c 2150px, #000 2400px) left bottom / 100% 10px no-repeat,
    linear-gradient(90deg, #04222c 0, #020a0d 200px, #000 500px);
}
.defs { position: absolute; width: 0; height: 0; }
button { border: 0; background: none; font: inherit; color: inherit; display: grid; place-items: center; }
a { color: inherit; text-decoration: none; }

/* Menu bar */
.menubar {
  flex: none;
  height: 72px;
  margin-bottom: 2px;
  padding: 0 32px 2px 40px;
  display: flex;
  align-items: center;
  justify-content: space-between;
  color: #eef1f1;
  font: 25px/32px Inter, sans-serif;
  background: linear-gradient(90deg, #1b2a2c 0, #24383d 20%, #2e4f55 40%, #28474c 60%, #1d373b 70%, #14282d 82%, #071316 100%);
}
.menus { display: flex; align-items: center; gap: 43px; }
.menus strong { font-weight: 700; }
.apple { width: 26px; height: 32px; fill: #eef1f1; overflow: visible; }
.status { display: flex; align-items: center; gap: 38px; }
.status time { white-space: nowrap; font-size: 27px; margin-left: -3px; }
.lang { width: 44px; height: 32px; border: 2px solid #e8ebeb; border-radius: 5px; font-size: 22px; font-weight: 600; line-height: 28px; text-align: center; }
.zm { font: 600 17px Inter, sans-serif; fill: #fff; }

/* Windows */
.stage { flex: 1; min-height: 0; position: relative; display: flex; }
.back-window { position: absolute; right: 0; }
.purple { top: 0; bottom: 0; width: 200px; border-radius: 20px; background: #33093a; border: 1px solid #6a5a6e; }
.pale { top: 80px; bottom: 8px; right: 7px; width: 200px; border-radius: 12px; background: #dcdcdc; }
.window {
  flex: 1;
  min-width: 0;
  position: relative;
  margin-right: 22px;
  display: flex;
  flex-direction: column;
  border-radius: 0 20px 20px 0;
  overflow: hidden;
  background: #f9f9fb;
  box-shadow: 0 0 2px #777;
}

/* Tab strip */
.tabstrip { flex: none; height: 88px; display: flex; align-items: center; background: #efeff4; border-top: 2px solid #fafafc; font: 22px/28px Inter, sans-serif; }
.lights { width: 214px; padding-left: 4px; display: flex; gap: 16px; }
.lights i { width: 24px; height: 24px; border-radius: 50%; }
.red { background: #ed6a5e; }
.yellow { background: #f4bf4f; }
.green { background: #61c554; }
.view-btn { width: 62px; align-self: stretch; padding-right: 28px; border-right: 2px solid #bcbcc2; }
.tabs { display: flex; align-self: stretch; flex: 0 1 2402px; padding-left: 4px; }
.tab { flex: 1; min-width: 0; margin: 6px 4px 8px; padding: 0 18px 0 16px; display: flex; align-items: center; border-radius: 8px; color: #5b5b66; }
.tab.active { background: #fff; color: #15141a; box-shadow: 0 0 8px rgba(0, 0, 0, .4); }
.fav { flex: none; width: 32px; height: 32px; margin-right: 10px; }
.tab a { flex: 1; min-width: 0; white-space: nowrap; overflow: hidden; padding-top: 2px; -webkit-mask: linear-gradient(90deg, #000 76%, transparent 100%); mask: linear-gradient(90deg, #000 76%, transparent 100%); }
.close { flex: none; width: 26px; height: 26px; }
.close svg { width: 16px; height: 16px; }
.tab-tools { display: flex; gap: 41px; padding-left: 19px; }
.tab-tools button { width: 40px; }

/* Toolbar */
.toolbar { flex: none; height: 81px; padding: 0 32px 0 10px; display: flex; align-items: center; border-bottom: 1px solid #c8c8cc; }
.nav-btns { display: flex; gap: 40px; flex: 0 0 430px; }
.urlbar { flex: 0 1 1872px; min-width: 0; height: 64px; padding: 0 16px; display: flex; align-items: center; gap: 22px; background: #efeff4; border-radius: 8px; font: 27px/36px Inter, sans-serif; }
.urlbar > svg { flex: none; }
.url { flex: 1; min-width: 0; white-space: nowrap; overflow: hidden; color: #828289; padding-top: 2px; -webkit-mask: linear-gradient(90deg, #000 97%, transparent 100%); mask: linear-gradient(90deg, #000 97%, transparent 100%); }
.url b { font-weight: 400; color: #15141a; }
.zoom { width: 88px; height: 40px; background: #fff; border-radius: 6px; font-size: 22px; color: #15141a; }
.urlbar .dl { margin: 0 4px; }
.ext-btns { margin-left: auto; display: flex; gap: 40px; }

/* Page */
.page { flex: 1; min-height: 0; position: relative; display: flex; background: #f9f9f7; }
.sidebar { flex: 0 0 604px; display: flex; flex-direction: column; align-items: flex-start; padding: 63px 42px 73px; background: #f5f6f1; }
.logo { display: flex; align-items: flex-start; gap: 12px; padding-left: 17px; font: 44px/52px Inter, sans-serif; }
.logo span { padding-top: 4px; }
.side-nav { margin-top: 121px; display: flex; flex-direction: column; gap: 92px; font-size: 41px; line-height: 50px; }
.side-nav a { display: flex; align-items: center; gap: 41px; }
.side-nav svg { overflow: visible; }
.side-nav span { padding-top: 4px; }
.side-nav .current span { -webkit-text-stroke: 1px #222; }
.collapse { margin-top: auto; margin-left: 28px; }

.main { flex: 1; min-width: 0; display: flex; flex-direction: column; }
.topbar { flex: none; padding: 52px 42px 0 83px; display: flex; align-items: center; justify-content: space-between; }
.crumbs { display: flex; align-items: center; gap: 37px; font-size: 35px; line-height: 44px; padding-top: 8px; }
.crumbs svg { width: 14px; height: 28px; }
.crumbs span { color: #6f6f6f; }
.avatar { width: 84px; height: 84px; border-radius: 50%; background: #e3dcf5; color: #6f6f6f; font-size: 34px; padding-top: 4px; }
.units { flex: 1; min-height: 0; overflow: hidden; margin-top: 86px; padding: 0 24px; }
.card { max-width: 1443px; margin: 0 auto; border: 2px solid #d2d2c3; border-radius: 6px; background: #fff; }
.lessons { border-top: 0; border-radius: 0 0 6px 6px; }
.row { height: 206px; padding: 0 65px 0 62px; display: flex; align-items: center; gap: 61px; background: #f0fbea; border-bottom: 2px solid #d2d2c3; border-radius: 6px; color: #707070; }
.row:first-child { border-top: 1px solid #d2d2c3; border-bottom: 0; }
.row:last-child { border-bottom: 0; height: 205px; }
.kind { flex: none; width: 64px; height: 64px; }
.info { flex: 1; padding-top: 6px; }
.info h3 { font-size: 40px; line-height: 50px; font-weight: 400; }
.info p { font-size: 34px; line-height: 48px; }
.info a { margin-left: 18px; text-decoration: underline; text-decoration-thickness: 2px; text-underline-offset: 4px; }
.score { color: #4f9658; }
.done { flex: none; width: 58px; height: 58px; }
.group { height: 80px; padding: 4px 62px 0; font-size: 40px; line-height: 76px; font-weight: 400; background: #f5f5f2; border-radius: 6px; }
.next { margin-top: 64px; padding: 82px 62px 60px; }
.next h2 { font-size: 53px; line-height: 60px; font-weight: 400; -webkit-text-stroke: 1px #222; }
.chat { position: absolute; right: 52px; bottom: 52px; width: 125px; height: 125px; border-radius: 50%; background: #222; box-shadow: 0 4px 60px rgba(0, 0, 0, .18); }

/* Dock */
.dock {
  flex: none;
  position: relative;
  height: 124px;
  margin: 4px 84px 10px 85px;
  padding: 17px 5px 0 3px;
  display: flex;
  border: 2px solid rgba(200, 215, 215, .4);
  border-radius: 36px;
  background: linear-gradient(90deg, #57646b 0, #57626a 13%, #6c9b99 19%, #5c7c74 23%, #595c59 28%, #6a9dac 36%, #59636a 41%, #5f6966 47%, #9cc9be 54%, #82dfc0 59%, #62a586 65%, #5c9b7f 69%, #577461 75%, #585e5a 82%, #585959 100%) padding-box;
  box-shadow: 0 0 110px rgba(0, 0, 0, .28);
}
.app { flex: 1; min-width: 0; position: relative; display: flex; flex-direction: column; align-items: center; gap: 17px; }
.app > svg { width: 76px; height: 76px; overflow: visible; }
.on::after { content: ""; width: 7px; height: 8px; border-radius: 50%; background: #000; }
.teal::after { background: #1d6450; }
.dark::after { background: #04351f; }
.rule { flex: none; width: 45px; height: 92px; margin-top: -3px; background: linear-gradient(90deg, transparent 21px, #2b332f 21px 23px, transparent 23px); }
.badge { position: absolute; left: 50%; top: -9px; margin-left: 15px; width: 36px; height: 36px; border-radius: 50%; background: #e25241; color: #fff; font: 22px/36px "Liberation Sans", sans-serif; text-align: center; }
.tv { font: 500 30px Inter, sans-serif; fill: #fff; }
.zoomtxt { font: 600 21px Inter, sans-serif; fill: #fff; }
.pctxt { font: 700 27px Inter, sans-serif; fill: #fff; }
.pdftxt { font: 700 15px "Liberation Sans", sans-serif; fill: #fff; }
.filetxt { font: 14px "Liberation Sans", sans-serif; fill: #666; }
```
